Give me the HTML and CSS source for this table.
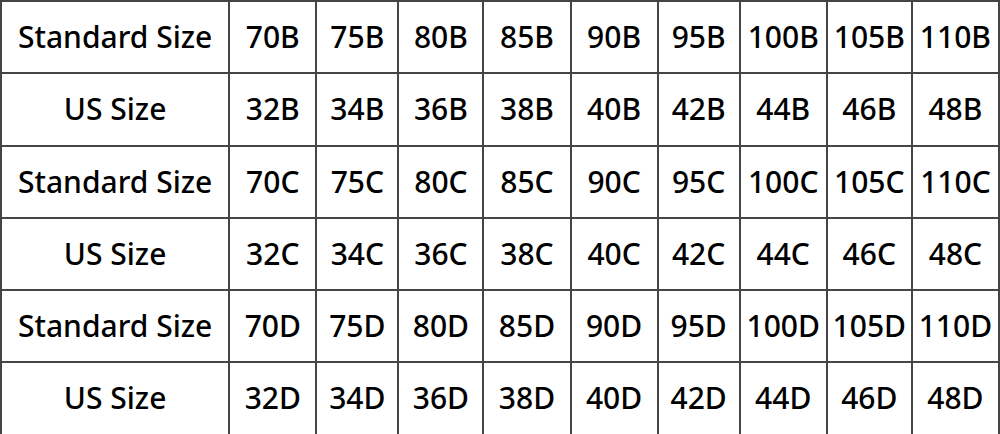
FILE: index.html
```html
<!DOCTYPE html>
<html lang="en">
<head>
<meta charset="utf-8">
<title>Size Chart</title>
<link rel="stylesheet" href="styles.css">
</head>
<body>
<table class="size-table">
  <colgroup>
    <col class="c-label">
    <col class="c-w87"><col class="c-w82"><col class="c-w86"><col class="c-w87"><col class="c-w87">
    <col class="c-w82"><col class="c-w87"><col class="c-w86"><col class="c-w87">
  </colgroup>
  <tbody>
    <tr><td>Standard Size</td><td>70B</td><td>75B</td><td>80B</td><td>85B</td><td>90B</td><td>95B</td><td>100B</td><td>105B</td><td>110B</td></tr>
    <tr><td>US Size</td><td>32B</td><td>34B</td><td>36B</td><td>38B</td><td>40B</td><td>42B</td><td>44B</td><td>46B</td><td>48B</td></tr>
    <tr><td>Standard Size</td><td>70C</td><td>75C</td><td>80C</td><td>85C</td><td>90C</td><td>95C</td><td>100C</td><td>105C</td><td>110C</td></tr>
    <tr><td>US Size</td><td>32C</td><td>34C</td><td>36C</td><td>38C</td><td>40C</td><td>42C</td><td>44C</td><td>46C</td><td>48C</td></tr>
    <tr><td>Standard Size</td><td>70D</td><td>75D</td><td>80D</td><td>85D</td><td>90D</td><td>95D</td><td>100D</td><td>105D</td><td>110D</td></tr>
    <tr><td>US Size</td><td>32D</td><td>34D</td><td>36D</td><td>38D</td><td>40D</td><td>42D</td><td>44D</td><td>46D</td><td>48D</td></tr>
  </tbody>
</table>
</body>
</html>
```
FILE: styles.css
```css
html, body {
  margin: 0;
  padding: 0;
  background: #ffffff;
}
body {
  width: 1000px;
  height: 434px;
  overflow: hidden;
}
.size-table {
  border-collapse: collapse;
  table-layout: fixed;
  width: 1000px;
  font-family: "Noto Sans", "Open Sans", sans-serif;
  font-size: 30px;
  font-weight: 500;
  color: #000;
}
.c-label { width: 228px; }
.c-w87 { width: 87px; }
.c-w86 { width: 85px; }
.c-w82 { width: 82px; }
.size-table td {
  border: 2px solid #454545;
  height: 70.25px;
  padding: 0;
  text-align: center;
  vertical-align: middle;
  white-space: nowrap;
  overflow: hidden;
  line-height: 1;
}
```
